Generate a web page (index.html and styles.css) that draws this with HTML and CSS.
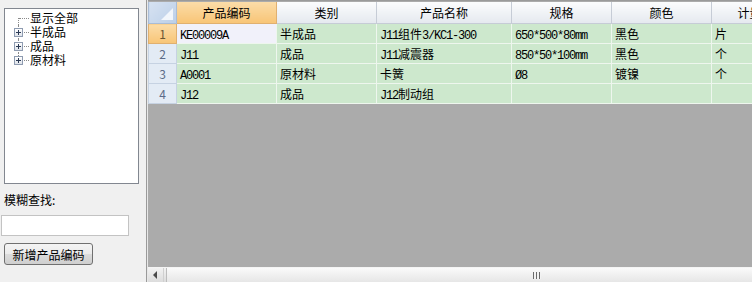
FILE: index.html
```html
<!DOCTYPE html>
<html lang="zh-CN">
<head>
    <meta charset="UTF-8">
    <title>产品编码</title>
    <link rel="stylesheet" href="styles.css">
</head>
<body>
    <!-- Left: category tree and search -->
    <div class="side">
        <div class="tree">
            <div class="node first"><span class="twig"></span>显示全部</div>
            <div class="node"><span class="twig"><span class="plus"><svg width="9" height="9" viewBox="0 0 9 9"><path d="M2 4.5h5M4.5 2v5" stroke="#2b3a55" stroke-width="1"/></svg></span></span>半成品</div>
            <div class="node"><span class="twig"><span class="plus"><svg width="9" height="9" viewBox="0 0 9 9"><path d="M2 4.5h5M4.5 2v5" stroke="#2b3a55" stroke-width="1"/></svg></span></span>成品</div>
            <div class="node last"><span class="twig"><span class="plus"><svg width="9" height="9" viewBox="0 0 9 9"><path d="M2 4.5h5M4.5 2v5" stroke="#2b3a55" stroke-width="1"/></svg></span></span>原材料</div>
        </div>
        <div class="search-label">模糊查找:</div>
        <input class="search-box" type="text">
        <button class="add-btn">新增产品编码</button>
    </div>

    <!-- Right: product grid -->
    <div class="grid-wrap">
        <div class="grid-area">
            <table class="grid">
                <colgroup>
                    <col style="width:28px">
                    <col style="width:100px">
                    <col style="width:100px">
                    <col style="width:135px">
                    <col style="width:100px">
                    <col style="width:100px">
                    <col style="width:100px">
                </colgroup>
                <tr class="head">
                    <th class="corner"><span class="tri"></span></th>
                    <th class="active">产品编码</th>
                    <th>类别</th>
                    <th>产品名称</th>
                    <th>规格</th>
                    <th>颜色</th>
                    <th>计量单位</th>
                </tr>
                <tr>
                    <td class="rh active">1</td>
                    <td class="sel"><span class="mono">KE00009A</span></td>
                    <td>半成品</td>
                    <td><span class="mono">J11</span>组件<span class="mono">3/KC1-300</span></td>
                    <td><span class="mono">650*500*80mm</span></td>
                    <td>黑色</td>
                    <td>片</td>
                </tr>
                <tr>
                    <td class="rh">2</td>
                    <td><span class="mono">J11</span></td>
                    <td>成品</td>
                    <td><span class="mono">J11</span>减震器</td>
                    <td><span class="mono">850*50*100mm</span></td>
                    <td>黑色</td>
                    <td>个</td>
                </tr>
                <tr>
                    <td class="rh">3</td>
                    <td><span class="mono">A0001</span></td>
                    <td>原材料</td>
                    <td>卡簧</td>
                    <td><span class="mono">Ø8</span></td>
                    <td>镀镍</td>
                    <td>个</td>
                </tr>
                <tr>
                    <td class="rh">4</td>
                    <td><span class="mono">J12</span></td>
                    <td>成品</td>
                    <td><span class="mono">J12</span>制动组</td>
                    <td></td>
                    <td></td>
                    <td></td>
                </tr>
            </table>
        </div>
        <div class="hscroll">
            <div class="arrow"><svg width="5" height="8" viewBox="0 0 5 8"><path d="M4 0v8L0 4z" fill="#4a4a4a"/></svg></div>
            <div class="thumb"><span class="grip"></span></div>
        </div>
    </div>
</body>
</html>
```

FILE: styles.css
```css
/* Overall layout */
body {
    margin: 0;
    width: 752px;
    height: 282px;
    display: flex;
    overflow: hidden;
    background: #f0f0f0;
    font-family: "Noto Sans CJK SC", "Liberation Sans", sans-serif;
    font-size: 12px;
    color: #000;
}

/* Left column */
.side {
    width: 146px;
    flex: none;
    display: flex;
    flex-direction: column;
    align-items: flex-start;
    border-right: 1px solid #9a9a9a;
}

.tree {
    box-sizing: border-box;
    width: 135px;
    height: 176px;
    margin: 8px 0 0 4px;
    padding-top: 2px;
    background: #fff;
    border: 1px solid #828790;
}

.node {
    display: flex;
    align-items: center;
    height: 14px;
    line-height: 14px;
}

.twig {
    position: relative;
    width: 25px;
    height: 14px;
    flex: none;
}

/* dotted connector lines */
.twig::before {
    content: "";
    position: absolute;
    left: 13px;
    top: 0;
    height: 14px;
    border-left: 1px dotted #8a8a8a;
}

.first .twig::before {
    top: 7px;
    height: 7px;
}

.last .twig::before {
    height: 7px;
}

.twig::after {
    content: "";
    position: absolute;
    left: 14px;
    top: 7px;
    width: 10px;
    border-top: 1px dotted #8a8a8a;
}

.plus {
    position: absolute;
    left: 9px;
    top: 3px;
    width: 9px;
    height: 9px;
    box-sizing: border-box;
    z-index: 1;
    background: linear-gradient(#ffffff, #dfe3ea);
    border: 1px solid #8e9bb0;
    display: flex;
}

.plus svg {
    margin: -1px;
}

.search-label {
    margin: 8px 0 0 4px;
    height: 16px;
    line-height: 16px;
}

.search-box {
    box-sizing: border-box;
    width: 128px;
    height: 21px;
    margin: 7px 0 0 1px;
    padding: 0;
    border: 1px solid #c3c3c3;
    background: #fff;
}

.add-btn {
    box-sizing: border-box;
    width: 89px;
    height: 22px;
    margin: 7px 0 0 4px;
    padding: 0;
    border: 1px solid #707070;
    border-radius: 3px;
    background: linear-gradient(#f4f4f4 0%, #ebebeb 50%, #dcdcdc 51%, #cfcfcf 100%);
    font-family: "Noto Sans CJK SC", sans-serif;
    font-size: 12px;
    color: #000;
}

/* Right column: grid */
.grid-wrap {
    flex: 1;
    display: flex;
    flex-direction: column;
    min-width: 0;
    border-left: 1px solid #e8e8e8;
}

.grid-area {
    flex: 1;
    background: #ababab;
    overflow: hidden;
    padding-top: 1px;
    border-top: 1px solid #9a9a9a;
    box-sizing: border-box;
}

.grid {
    table-layout: fixed;
    border-collapse: collapse;
    width: 663px;
}

.grid th,
.grid td {
    padding: 0 3px;
    white-space: nowrap;
    overflow: hidden;
    font-weight: normal;
    line-height: 18px;
    vertical-align: middle;
}

.grid th {
    height: 21px;
    text-align: center;
    background: linear-gradient(#fbfcfd, #e5e9ef);
    border: 1px solid #c6ccd6;
    border-top: none;
}

.grid th.active {
    background: linear-gradient(#fbdca8, #f8c577);
    border-color: #e0b070;
}

.grid th.corner {
    position: relative;
    background: linear-gradient(135deg, #d6e2f1, #bccfe8);
    border-color: #a9bcd6;
}

.tri {
    position: absolute;
    right: 3px;
    bottom: 3px;
    width: 0;
    height: 0;
    border-left: 12px solid transparent;
    border-bottom: 12px solid #f2f6fb;
}

.grid td {
    height: 19px;
    background: #cde8cd;
    border: 1px solid #eef6ee;
}

.grid td.sel {
    background: #f1f1fa;
}

.grid td.rh {
    padding: 0;
    text-align: center;
    color: #5c6b88;
    background: #e3ebf5;
    border-color: #c6d2e2;
}

.grid td.rh.active {
    background: linear-gradient(#fbdca8, #f8c577);
    color: #6a5532;
    border-color: #e0b070;
}

/* narrow latin text, like a bitmap song-ti face */
.mono {
    font-family: "Liberation Mono", monospace;
    font-size: 12px;
    letter-spacing: -1.2px;
    line-height: 1;
}

/* Horizontal scrollbar */
.hscroll {
    height: 14px;
    display: flex;
    border-top: 1px solid #f4f4f4;
    background: linear-gradient(#f2f2f2, #dcdcdc);
}

.arrow {
    width: 15px;
    flex: none;
    display: flex;
    align-items: center;
    justify-content: center;
    border-right: 1px solid #d0d0d0;
}

.thumb {
    flex: 1;
    margin-left: 2px;
    display: flex;
    align-items: center;
    padding-left: 366px;
    background: linear-gradient(#fafafa, #e6e6e6);
    border-left: 1px solid #bcbcbc;
}

.grip {
    width: 8px;
    height: 7px;
    background: repeating-linear-gradient(90deg, #6a6a6a 0, #6a6a6a 1px, #f2f2f2 1px, #f2f2f2 3px);
}
```
